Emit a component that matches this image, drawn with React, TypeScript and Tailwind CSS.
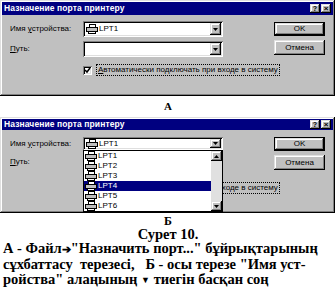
import React from "react";

const raised =
  "shadow-[inset_-1px_-1px_0_#000,inset_1px_1px_0_#dfdfdf,inset_-2px_-2px_0_#808080,inset_2px_2px_0_#fff]";
const sunken =
  "shadow-[inset_1px_1px_0_#808080,inset_-1px_-1px_0_#fff,inset_2px_2px_0_#000,inset_-2px_-2px_0_#dfdfdf]";

const uiFont = { fontFamily: '"Liberation Sans", Arial, sans-serif' };
const bookFont = { fontFamily: '"Liberation Serif", "Times New Roman", serif' };

function Printer() {
  return (
    <svg width="12" height="10" viewBox="0 0 12 10" shapeRendering="crispEdges" className="shrink-0">
      <rect x="3.5" y="0.5" width="6" height="3" fill="#fff" stroke="#000" />
      <rect x="0.5" y="3.5" width="11" height="4" fill="#c0c0c0" stroke="#000" />
      <rect x="2.5" y="7.5" width="7" height="2" fill="#fff" stroke="#000" />
    </svg>
  );
}

function Arrow({ up = false }: { up?: boolean }) {
  return (
    <div className={`w-[11px] h-full bg-[#c0c0c0] flex items-center justify-center ${raised}`}>
      <svg width="5" height="3" viewBox="0 0 5 3" className={up ? "rotate-180" : ""}>
        <path d="M0 0h5L2.5 3z" fill="#000" />
      </svg>
    </div>
  );
}

function TitleBar({ tall }: { tall: boolean }) {
  return (
    <div
      className={`flex items-center justify-between bg-[#000080] px-[2px] ${tall ? "h-[13px]" : "h-[11px]"}`}
    >
      <span className="text-white font-bold text-[8.5px] leading-none tracking-[0.1px]">
        Назначение порта принтеру
      </span>
      <div className="flex gap-[1px]">
        <div className={`w-[10px] h-[9px] bg-[#c0c0c0] flex items-center justify-center text-[7px] font-bold leading-none ${raised}`}>
          ?
        </div>
        <div className={`w-[10px] h-[9px] bg-[#c0c0c0] flex items-center justify-center text-[8px] font-bold leading-none ${raised}`}>
          ×
        </div>
      </div>
    </div>
  );
}

function Combo({ h, value }: { h: string; value?: string }) {
  return (
    <div className={`w-[140px] ${h} bg-white flex items-stretch p-[2px] ${sunken}`}>
      <div className="flex-1 flex items-center gap-[1px] pl-[1px]">
        {value && (
          <>
            <Printer />
            <span className="text-[8px] leading-none">{value}</span>
          </>
        )}
      </div>
      <Arrow />
    </div>
  );
}

function Btn({ label, def, h }: { label: string; def?: boolean; h: string }) {
  return (
    <div className={`w-[51px] ${h} ${def ? "border border-black" : ""}`}>
      <div className={`w-full h-full bg-[#c0c0c0] flex items-center justify-center text-[8px] leading-none ${raised}`}>
        {label}
      </div>
    </div>
  );
}

function CheckRow() {
  return (
    <div className="flex items-center gap-[4px]">
      <div className={`w-[9px] h-[9px] shrink-0 bg-white flex items-center justify-center ${sunken}`}>
        <svg width="7" height="7" viewBox="0 0 7 7">
          <path d="M1 3l2 2 3-4" fill="none" stroke="#000" strokeWidth="1.5" />
        </svg>
      </div>
      <span className="text-[8px] leading-none border border-dotted border-black px-[1px] py-[1px] whitespace-nowrap">
        <u>А</u>втоматически подключать при входе в систему
      </span>
    </div>
  );
}

function DialogA() {
  return (
    <div className={`w-[335px] h-[96px] bg-[#c0c0c0] p-[2px] ${raised}`} style={uiFont}>
      <TitleBar tall />
      <div className="flex pl-[8px] pt-[6px]">
        <div className="w-[213px] shrink-0 flex flex-col">
          <div className="flex items-center">
            <div className="w-[73px] text-[8px] leading-none">
              Имя <u>у</u>стройства:
            </div>
            <Combo h="h-[16px]" value="LPT1" />
          </div>
          <div className="flex items-center mt-[4px]">
            <div className="w-[73px] text-[8px] leading-none">
              <u>П</u>уть:
            </div>
            <Combo h="h-[16px]" />
          </div>
          <div className="ml-[73px] mt-[7px]">
            <CheckRow />
          </div>
        </div>
        <div className="flex flex-col gap-[4px] ml-[51px] pt-[1px]">
          <Btn label="OK" def h="h-[14px]" />
          <Btn label="Отмена" h="h-[15px]" />
        </div>
      </div>
    </div>
  );
}

const ports = ["LPT1", "LPT2", "LPT3", "LPT4", "LPT5", "LPT6"];

function DialogB() {
  return (
    <div className={`w-[335px] h-[96px] bg-[#c0c0c0] p-[2px] ${raised}`} style={uiFont}>
      <TitleBar tall={false} />
      <div className="flex pl-[8px] pt-[7px]">
        <div className="w-[213px] shrink-0 flex flex-col">
          <div className="flex items-center">
            <div className="w-[73px] text-[8px] leading-none">
              Имя <u>у</u>стройства:
            </div>
            <div className="relative">
              <Combo h="h-[13px]" value="LPT1" />
              {/* open drop-down list */}
              <div className="absolute left-0 top-[13px] w-[140px] h-[62px] bg-white border border-black flex z-10">
                <div className="flex-1 flex flex-col">
                  {ports.map((p) => (
                    <div
                      key={p}
                      className={`h-[10px] flex items-center gap-[1px] pl-[1px] text-[8px] leading-none ${
                        p === "LPT4" ? "bg-[#000080] text-white" : ""
                      }`}
                    >
                      <Printer />
                      <span>{p}</span>
                    </div>
                  ))}
                </div>
                <div className="w-[11px] flex flex-col bg-[#e0e0e0]">
                  <div className="h-[10px]">
                    <Arrow up />
                  </div>
                  <div className="flex-1" />
                  <div className="h-[10px]">
                    <Arrow />
                  </div>
                </div>
              </div>
            </div>
          </div>
          <div className="flex items-center mt-[5px] h-[14px]">
            <div className="w-[73px] text-[8px] leading-none">
              <u>П</u>уть:
            </div>
          </div>
          <div className="ml-[73px] mt-[13px]">
            <CheckRow />
          </div>
        </div>
        <div className="flex flex-col gap-[4px] ml-[51px]">
          <Btn label="OK" def h="h-[14px]" />
          <Btn label="Отмена" h="h-[15px]" />
        </div>
      </div>
    </div>
  );
}

export default function App() {
  return (
    <div className="w-[336px] h-[288px] bg-white overflow-hidden text-black">
      <DialogA />
      <div className="h-[21px] flex items-center justify-center text-[11px] font-bold" style={bookFont}>
        А
      </div>
      <DialogB />
      <div className="font-bold text-[14.5px] leading-[14px] pt-[2px]" style={bookFont}>
        <div className="text-center text-[12px] leading-[12px]">Б</div>
        <div className="text-center">Сурет 10.</div>
        <div className="pl-[3px] leading-[15px]">
          <div className="whitespace-nowrap">
            А - Файл<span className="text-[11px]">➔</span>"Назначить порт..." бұйрықтарының
          </div>
          <div className="whitespace-pre">сұхбаттасу  терезесі,   Б - осы терезе "Имя уст-</div>
          <div className="whitespace-nowrap">
            ройства" алаңының <span className="text-[9px] align-middle">▼</span> тиегін басқан соң
          </div>
        </div>
      </div>
    </div>
  );
}
